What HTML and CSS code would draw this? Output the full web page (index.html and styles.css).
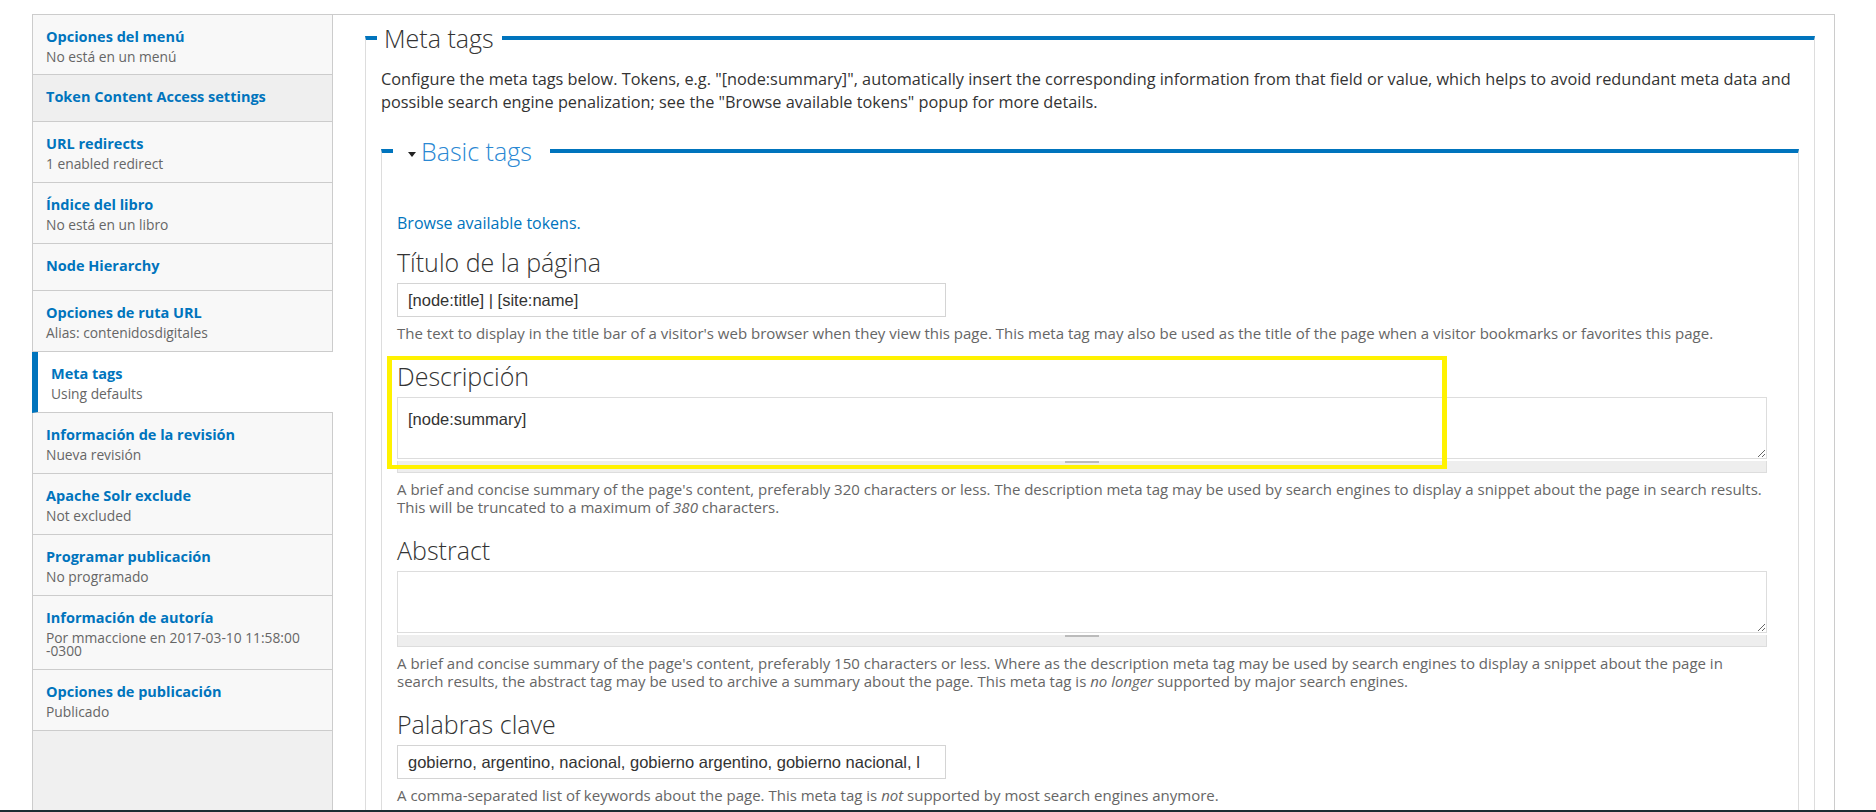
FILE: index.html
```html
<!DOCTYPE html>
<html lang="es">
<head>
    <meta charset="UTF-8">
    <meta name="viewport" content="width=device-width, initial-scale=1.0">
    <title>Meta tags</title>
    <link rel="stylesheet" href="styles.css">
</head>
<body>
    <div class="page">
        <div class="layout">
            <ul class="vtabs">
                <li class="vtab first">
                    <strong class="vtab-title">Opciones del menú</strong>
                    <span class="vtab-summary">No está en un menú</span>
                </li>
                <li class="vtab vtab-hover single">
                    <strong class="vtab-title">Token Content Access settings</strong>
                </li>
                <li class="vtab">
                    <strong class="vtab-title">URL redirects</strong>
                    <span class="vtab-summary">1 enabled redirect</span>
                </li>
                <li class="vtab">
                    <strong class="vtab-title">Índice del libro</strong>
                    <span class="vtab-summary">No está en un libro</span>
                </li>
                <li class="vtab single">
                    <strong class="vtab-title">Node Hierarchy</strong>
                </li>
                <li class="vtab">
                    <strong class="vtab-title">Opciones de ruta URL</strong>
                    <span class="vtab-summary">Alias: contenidosdigitales</span>
                </li>
                <li class="vtab selected">
                    <strong class="vtab-title">Meta tags</strong>
                    <span class="vtab-summary">Using defaults</span>
                </li>
                <li class="vtab">
                    <strong class="vtab-title">Información de la revisión</strong>
                    <span class="vtab-summary">Nueva revisión</span>
                </li>
                <li class="vtab">
                    <strong class="vtab-title">Apache Solr exclude</strong>
                    <span class="vtab-summary">Not excluded</span>
                </li>
                <li class="vtab">
                    <strong class="vtab-title">Programar publicación</strong>
                    <span class="vtab-summary">No programado</span>
                </li>
                <li class="vtab">
                    <strong class="vtab-title">Información de autoría</strong>
                    <span class="vtab-summary">Por mmaccione en 2017-03-10 11:58:00 -0300</span>
                </li>
                <li class="vtab">
                    <strong class="vtab-title">Opciones de publicación</strong>
                    <span class="vtab-summary">Publicado</span>
                </li>
                <li class="vtab-filler"></li>
            </ul>

            <div class="panes">
                <fieldset class="group">
                    <legend>Meta tags</legend>
                    <p class="group-desc">Configure the meta tags below. Tokens, e.g. "[node:summary]", automatically insert the corresponding information from that field or value, which helps to avoid redundant meta data and possible search engine penalization; see the "Browse available tokens" popup for more details.</p>

                    <fieldset class="group group-inner">
                        <legend><span class="toggle"></span>Basic tags</legend>
                        <a class="token-link" href="#">Browse available tokens.</a>

                        <div class="form-item">
                            <label>Título de la página</label>
                            <input class="form-text" type="text" value="[node:title] | [site:name]">
                            <div class="help">The text to display in the title bar of a visitor's web browser when they view this page. This meta tag may also be used as the title of the page when a visitor bookmarks or favorites this page.</div>
                        </div>

                        <div class="form-item highlighted">
                            <label>Descripción</label>
                            <div class="resizable">
                                <textarea>[node:summary]</textarea>
                                <div class="grippie"><span class="grip"></span></div>
                            </div>
                            <div class="help">A brief and concise summary of the page's content, preferably 320 characters or less. The description meta tag may be used by search engines to display a snippet about the page in search results. This will be truncated to a maximum of <em>380</em> characters.</div>
                            <div class="marker"></div>
                        </div>

                        <div class="form-item">
                            <label>Abstract</label>
                            <div class="resizable">
                                <textarea></textarea>
                                <div class="grippie"><span class="grip"></span></div>
                            </div>
                            <div class="help">A brief and concise summary of the page's content, preferably 150 characters or less. Where as the description meta tag may be used by search engines to display a snippet about the page in search results, the abstract tag may be used to archive a summary about the page. This meta tag is <em>no longer</em> supported by major search engines.</div>
                        </div>

                        <div class="form-item">
                            <label>Palabras clave</label>
                            <input class="form-text keywords" type="text" value="gobierno, argentino, nacional, gobierno argentino, gobierno nacional, la nación">
                            <div class="help">A comma-separated list of keywords about the page. This meta tag is <em>not</em> supported by most search engines anymore.</div>
                        </div>
                    </fieldset>
                </fieldset>
            </div>
        </div>
        <div class="taskbar"></div>
    </div>
</body>
</html>
```

FILE: styles.css
```css
body {
    margin: 0;
    font-family: "Open Sans", "Liberation Sans", sans-serif;
    color: #333;
    background: #fff;
}
.page {
    height: 100vh;
    display: flex;
    flex-direction: column;
}
.layout {
    flex: 1;
    min-height: 0;
    overflow: hidden;
    display: flex;
    padding: 14px 41px 0 32px;
}
.taskbar {
    height: 2px;
    background: #1d2b33;
}

/* vertical tabs */
.vtabs {
    width: 301px;
    flex: none;
    margin: 0;
    padding: 0;
    list-style: none;
    display: flex;
    flex-direction: column;
    border-top: 1px solid #ccc;
}
.vtab {
    background: #f8f8f8;
    border-left: 1px solid #ccc;
    border-right: 1px solid #ccc;
    border-bottom: 1px solid #ccc;
    padding: 12px 13px 12px 13px;
}
.vtab.first {
    padding-bottom: 11px;
}
.vtab.single {
    padding-bottom: 14px;
}
.vtab-hover {
    background: #efefef;
}
.vtab.selected {
    background: #fff;
    border-left: 6px solid #0074bd;
    border-right: none;
}
.vtab-title {
    display: block;
    font-size: 14.5px;
    line-height: 20px;
    font-weight: bold;
    color: #0074bd;
}
.vtab-summary {
    display: block;
    margin-top: 3px;
    font-size: 13.8px;
    line-height: 13px;
    color: #666;
}
.vtab-filler {
    flex: 1;
    background: #f0f0f0;
    border-left: 1px solid #ccc;
    border-right: 1px solid #ccc;
}

/* content pane */
.panes {
    flex: 1;
    min-width: 0;
    border-top: 1px solid #ccc;
    border-right: 1px solid #ccc;
    padding: 8px 19px 0 32px;
}
.group {
    margin: 0;
    min-width: 0;
    border: 1px solid #ddd;
    border-top: 4px solid #0074bd;
    border-bottom: none;
    padding: 15px 15px 0 15px;
}
.group legend {
    margin-left: -4px;
    padding: 0 8px 0 7px;
    font-size: 25px;
    line-height: 30px;
    font-weight: 300;
    color: #333;
}
.group-desc {
    margin: 0 0 22px;
    font-size: 16.3px;
    line-height: 23px;
    color: #333;
}
.group-inner {
    padding: 46px 31px 0 15px;
}
.group-inner legend {
    padding: 0 18px 0 15px;
    color: #2a88d3;
}
.toggle {
    display: inline-block;
    width: 0;
    height: 0;
    margin-right: 5px;
    vertical-align: middle;
    border-left: 4px solid transparent;
    border-right: 4px solid transparent;
    border-top: 5px solid #222;
}
.token-link {
    display: block;
    margin-bottom: 12px;
    font-size: 16px;
    line-height: 23px;
    color: #0074bd;
    text-decoration: none;
}

/* form items */
.form-item {
    position: relative;
    margin-bottom: 19px;
}
.form-item label {
    display: block;
    margin-bottom: 6px;
    font-size: 25px;
    line-height: 30px;
    font-weight: 300;
    color: #333;
}
.form-text {
    box-sizing: border-box;
    width: 549px;
    height: 34px;
    padding: 0 10px;
    border: 1px solid #d4d4d4;
    border-radius: 0;
    font-family: "Liberation Sans", Arial, sans-serif;
    font-size: 16.5px;
    color: #333;
}
.form-text.keywords {
    padding-right: 25px;
}
.resizable textarea {
    display: block;
    box-sizing: border-box;
    width: 100%;
    height: 62px;
    margin: 0;
    padding: 12px 10px;
    border: 1px solid #ddd;
    border-radius: 0;
    font-family: "Liberation Sans", Arial, sans-serif;
    font-size: 16.5px;
    line-height: 18px;
    color: #333;
}
.grippie {
    height: 11px;
    background: #eee;
    border: 1px solid #ddd;
    border-top: none;
}
.grip {
    display: block;
    width: 34px;
    height: 2px;
    margin: 2px auto 0;
    background: #bbb;
}
.help {
    margin: 7px -6px 0 0;
    font-size: 15px;
    line-height: 18px;
    color: #666;
}
.marker {
    position: absolute;
    top: -5px;
    left: -10px;
    width: 1060px;
    height: 113px;
    box-sizing: border-box;
    border: 5px solid #fff200;
    border-top-width: 4px;
    border-bottom-width: 4px;
    pointer-events: none;
}
```
